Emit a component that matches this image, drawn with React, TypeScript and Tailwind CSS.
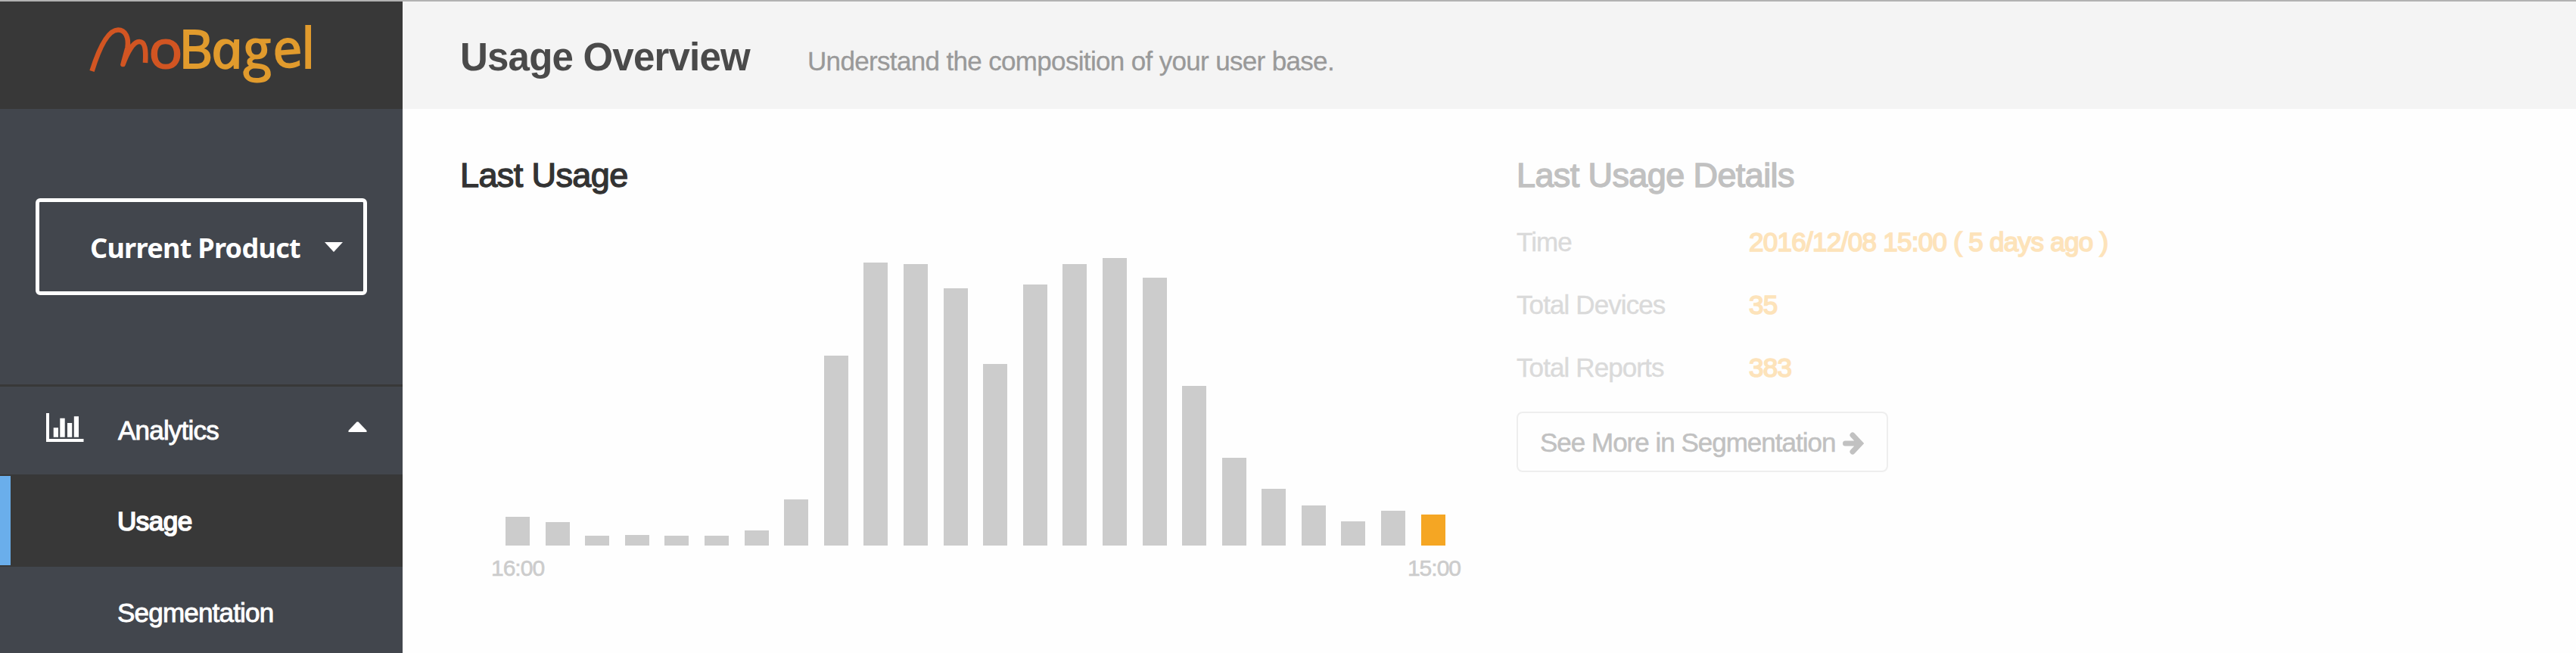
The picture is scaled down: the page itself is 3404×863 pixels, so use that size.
import React from "react";

const bars = [
  37.7, 30.7, 12.7, 13.7, 12.7, 12.7, 20, 60.7, 251.5, 374.3, 372, 340, 239.7,
  345, 372.5, 379.8, 353.8, 211, 115.7, 75, 52.8, 31.7, 46.3, 40.7,
];

const details = [
  ["Time", "2016/12/08 15:00 ( 5 days ago )"],
  ["Total Devices", "35"],
  ["Total Reports", "383"],
];

function Logo() {
  return (
    <svg className="ml-[110px] h-[142px] w-[320px]" viewBox="110 2 320 142">
      <path
        d="M121.5 94 C129 70 141 39.5 156 39.5 C166 39.5 170.5 50 168.5 63 L162.5 85 C168 70 176 55 184 55 C192 55 193 66 192 83"
        fill="none"
        stroke="#d25522"
        strokeWidth="6.6"
        strokeLinejoin="round"
      />
      <g fontFamily="'Open Sans', sans-serif" fontSize="69" strokeWidth="2">
        <text transform="translate(196.5 90) scale(1.08 1)" fill="#d25522" stroke="#d25522">
          o
        </text>
        <g fill="#e19b2d" stroke="#e19b2d">
          <text x="236.5" y="90">B</text>
          <text transform="translate(283 90) skewX(12) scale(1.06 1)" fontStyle="italic">
            a
          </text>
          <text transform="translate(324.5 90.5) skewX(12) scale(1.06 1.05)" fontStyle="italic">
            g
          </text>
          <text transform="translate(362 90) rotate(-4)">e</text>
          <text transform="translate(398.5 90) scale(1 1.05)">l</text>
        </g>
      </g>
    </svg>
  );
}

function Sidebar() {
  return (
    <aside className="flex w-[532px] shrink-0 flex-col bg-[#42464d] text-white">
      <div className="h-[142px] bg-[#383838]">
        <Logo />
      </div>
      <div className="h-[364px] pl-[47px] pt-[118px]">
        <button className="flex h-32 w-[438px] items-center rounded-[6px] border-[5px] border-white pl-[67px]">
          <span className="w-[278px] whitespace-nowrap pt-[4px] text-left font-['Noto_Sans',sans-serif] text-[36px] leading-none font-bold tracking-[-0.7px]">
            Current Product
          </span>
          <svg className="ml-[32px] h-[13px] w-6" viewBox="0 0 24 13">
            <path d="M0 0H24L12 13Z" fill="#fff" />
          </svg>
        </button>
      </div>
      <div className="flex h-[119px] items-start border-t-[3px] border-[#383838] pl-[61px] pt-[35px]">
        <svg className="h-[38px] w-[50px]" viewBox="0 0 50 38" fill="#fff">
          <path d="M0 0H4V34H49.5V38H0ZM9.7 19.3H16V31.7H9.7ZM18.3 6.7H24.7V31.7H18.3ZM28 13H34.2V31.7H28ZM36.8 4.2H43V31.7H36.8Z" />
        </svg>
        <span className="ml-[45px] mt-[5px] w-[304px] text-[35px] leading-none tracking-[-0.8px] [-webkit-text-stroke:0.9px]">
          Analytics
        </span>
        <svg className="mt-[11px] h-[14px] w-[25px]" viewBox="0 0 25 14">
          <path d="M0.5 14H24.5V12L13.5 0.5H11.5L0.5 12Z" fill="#fff" />
        </svg>
      </div>
      <div className="flex h-[122px] items-center bg-[#383838]">
        <div className="h-[118px] w-[14px] bg-[#6aaeeb]" />
        <span className="ml-[141px] text-[35px] leading-none tracking-[-0.5px] [-webkit-text-stroke:1.7px]">Usage</span>
      </div>
      <div className="flex h-[114px] items-start pl-[155px] pt-[43px]">
        <span className="text-[35px] leading-none tracking-[-0.8px] [-webkit-text-stroke:0.9px]">Segmentation</span>
      </div>
    </aside>
  );
}

function Chart() {
  return (
    <section className="w-[1396px] pt-[65px]">
      <h2 className="whitespace-nowrap text-[45px] leading-none tracking-[-0.6px] text-[#333] [-webkit-text-stroke:1.4px]">
        Last Usage
      </h2>
      <div className="ml-[60px] mt-[67px] flex h-[400px] w-[1242px] items-end justify-between">
        {bars.map((h, i) => (
          <div
            key={i}
            className={i === bars.length - 1 ? "w-8 bg-[#f5a623]" : "w-8 bg-[#ccc]"}
            style={{ height: h }}
          />
        ))}
      </div>
      <div className="ml-[41px] mt-[15px] flex w-[1281px] justify-between text-[30px] leading-none tracking-[-1px] text-[#ccc] [-webkit-text-stroke:0.6px]">
        <span>16:00</span>
        <span>15:00</span>
      </div>
    </section>
  );
}

function Details() {
  return (
    <section className="pt-[65px]">
      <h2 className="whitespace-nowrap text-[45px] leading-none tracking-[-0.6px] text-[#c1c1c1] [-webkit-text-stroke:1.4px]">
        Last Usage Details
      </h2>
      <dl className="mt-[48px] flex flex-col gap-[48px] text-[35px] leading-none">
        {details.map(([k, v]) => (
          <div key={k} className="flex">
            <dt className="w-[307px] tracking-[-0.9px] text-[#dadada] [-webkit-text-stroke:0.4px]">{k}</dt>
            <dd className="whitespace-nowrap tracking-[-0.7px] text-[#fde3ba] [-webkit-text-stroke:1.7px]">{v}</dd>
          </div>
        ))}
      </dl>
      <button className="mt-[41px] flex h-20 w-[491px] items-center rounded-[8px] border-2 border-[#eee] pl-[29px] text-[35px] leading-none tracking-[-1px] text-[#c1c1c1]">
        <span className="w-[400px] whitespace-nowrap pt-px text-left [-webkit-text-stroke:0.5px]">
          See More in Segmentation
        </span>
        <svg className="mt-[3px] h-[30px] w-7" viewBox="0 0 28 30" fill="none" stroke="#c1c1c1" strokeWidth="7" strokeLinecap="round">
          <path d="M3.5 15H21M13 4L23.5 15L13 26" />
        </svg>
      </button>
    </section>
  );
}

export default function App() {
  return (
    <div className="flex h-[863px] w-[3404px] flex-col overflow-hidden border-t-2 border-[#b2b2b2] bg-[#fefefe] font-['Liberation_Sans',Arial,sans-serif]">
      <div className="flex flex-1">
        <Sidebar />
        <main className="flex-1">
          <header className="flex h-[142px] items-baseline bg-[#f4f4f4] pl-[76px] pt-[48px]">
            <h1 className="w-[459px] whitespace-nowrap text-[51px] leading-none font-bold tracking-[-0.8px] text-[#4a4a4a]">
              Usage Overview
            </h1>
            <p className="whitespace-nowrap text-[35px] leading-none tracking-[-0.66px] text-[#999] [-webkit-text-stroke:0.3px]">
              Understand the composition of your user base.
            </p>
          </header>
          <div className="flex pl-[76px]">
            <Chart />
            <Details />
          </div>
        </main>
      </div>
    </div>
  );
}
